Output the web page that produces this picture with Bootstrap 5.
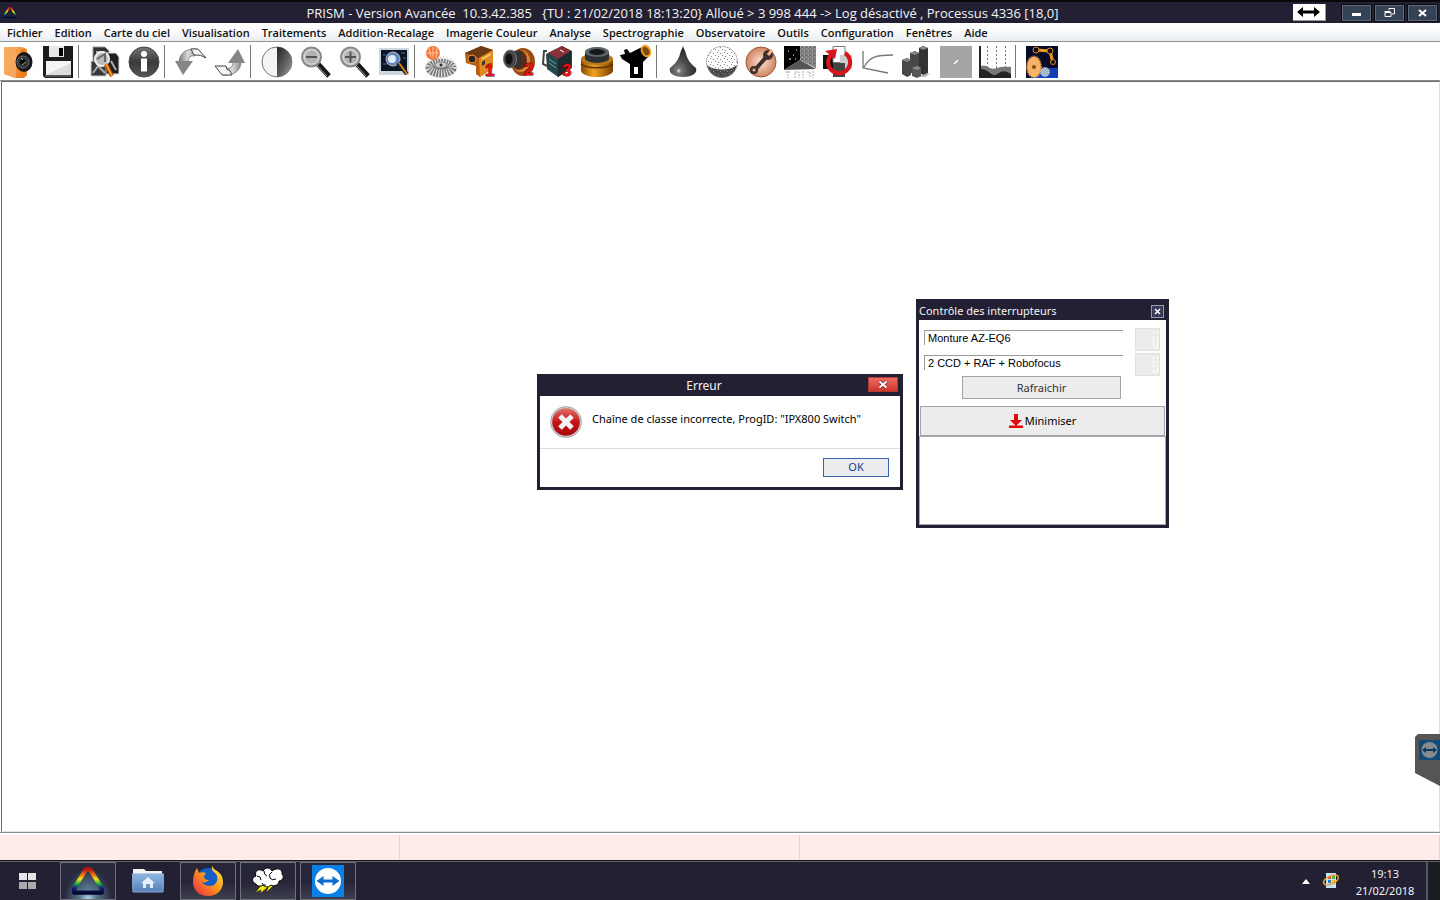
<!DOCTYPE html>
<html lang="fr">
<head>
<meta charset="utf-8">
<meta name="viewport" content="width=device-width, initial-scale=1">
<title>PRISM - Version Avancée</title>
<link href="https://cdn.jsdelivr.net/npm/bootstrap@5.3.0/dist/css/bootstrap.min.css" rel="stylesheet">
<style>
:root { --frame: #232033; }
body { font-family: "Noto Sans", "Open Sans", sans-serif; font-size: 12px; line-height: 16px; color: #000; background: #fff; }
button { padding: 0; border: 0; background: none; font: inherit; color: inherit; }
svg { display: block; }
a { color: inherit; text-decoration: none; }

/* Title bar */
.app-title { height: 23px; background: var(--frame); border-top: 2px solid #08080b; color: #f4f4f6; font-family: "Open Sans", sans-serif; font-size: 13px; }
.app-title .caption { white-space: pre; }
.app-icon { width: 72px; padding-left: 3px; }
.win-tools { gap: 4px; padding-right: 3px; }
.tv-arrow { width: 33px; height: 17px; margin-right: 12px; background: #fff; border-right: 1px solid #999; border-bottom: 1px solid #999; }
.win-btn { width: 29px; height: 16px; background: #344256; border: 1px solid #5c6878; outline: 1px solid #0c0c14; }

/* Menu and toolbar */
.menu-bar { height: 19px; padding: 1px 0 0 7px; gap: 12px; font-family: "Open Sans", sans-serif; font-size: 11px; font-weight: 600; color: #111; background: linear-gradient(#fff 25%, #e9edf0); border-bottom: 1px solid #8e9599; }
.tool-bar { height: 39px; padding-top: 1px; gap: 2px; border-bottom: 1px solid #8a8a8a; }
.tool { width: 37px; height: 32px; display: flex; justify-content: center; }
.tool svg { width: 32px; height: 32px; overflow: visible; }
.tool-sep { width: 6px; height: 33px; }
.tool-sep::before { content: ""; display: block; width: 1px; height: 100%; background: #777; }
.cam-no { font: 700 17px "Liberation Sans", sans-serif; fill: #f01010; stroke: #500; stroke-width: 1; paint-order: stroke; }

.workspace { min-height: 500px; margin-left: 1px; border: 1px solid #6d6d6d; border-right-color: #ddd; border-bottom-color: #e6e6e6; }
.status-bar { height: 29px; border-top: 1px solid #8f8f8f; padding-top: 2px; }
.status-bar div { background: #ffecea; border-right: 1px solid #e6d5d4; }
.status-cell { width: 400px; }

/* Floating windows */
.win { position: absolute; border: 3px solid var(--frame); background: #fff; }
.win-head { background: var(--frame); color: #f4f4f6; }
.win-error { left: 535px; top: 292px; width: 366px; }
.win-error .win-head { height: 19px; padding: 0 32px 1px 0; }
.close-red { right: 2px; top: 0; width: 30px; height: 15px; background: linear-gradient(#ef6b60, #cf352c); border: 1px solid #b13a34; }
.msg { height: 53px; padding: 10px; gap: 10px; border-bottom: 1px solid #ddd; font-size: 11px; }
.msg p { padding-top: 5px; }
.ok-row { height: 38px; padding: 0 11px 2px 0; }
.btn-ok { width: 66px; height: 19px; background: #ececee; border: 1px solid #3c62b0; color: #143a86; font-size: 11px; }
.win-switch { left: 914px; top: 217px; width: 253px; font-size: 11px; }
.win-switch .win-head { height: 18px; }
.close-small { width: 13px; height: 13px; background: #38385a; border: 1px solid #9a9aaf; margin-right: 2px; }
.switches { padding: 8px 6px 0 5px; gap: 2px; }
.switches .line { height: 23px; }
.field { width: 199px; height: 15px; margin-top: 2px; padding: 0 3px; border: 0; border-top: 1px solid #999; border-left: 1px solid #999; border-radius: 0; font: 11px/14px "Liberation Sans", sans-serif; }
.toggle { width: 25px; height: 23px; background: #ececec; border: 1px solid #e0e0e0; }
.btn-refresh { width: 159px; height: 23px; margin: -2px 0 0 38px; background: #ececec; border: 1px solid #a4a4a8; color: #333; }
.btn-min { height: 30px; margin: 7px 1px 0; gap: 2px; background: #ececec; border: 1px solid #a4a4a8; }
.blank { height: 89px; border: 1px solid #a9a9b4; }

.tv-tab { right: -1px; bottom: 45px; }

/* Task bar */
.task-bar { height: 39px; background: var(--frame); border-top: 1px solid #5a6264; box-shadow: 0 -1px #15151d; gap: 4px; color: #f3f3f5; font-size: 11px; }
.task { width: 56px; height: 38px; }
.task.open { border: 1px solid #6f717c; background: linear-gradient(#272638 55%, #3d3e4e); }
.task.active { background: radial-gradient(ellipse at 50% 105%, #c6e4f4 0, #54788f 22%, #29293d 62%); }
.clock { width: 74px; line-height: 17px; padding-top: 1px; }
.desk { width: 14px; height: 38px; background: #1b1e20; border-left: 2px solid #555a60; }
</style>
</head>
<body class="d-flex flex-column min-vh-100 overflow-hidden">

<svg width="0" height="0" class="position-absolute" aria-hidden="true">
  <defs>
    <linearGradient id="gDark" x1="0" y1="0" x2="0" y2="1"><stop offset="0" stop-color="#777"/><stop offset=".5" stop-color="#3a3a3a"/><stop offset="1" stop-color="#555"/></linearGradient>
    <linearGradient id="gRib" x1="0" y1="0" x2="1" y2="0"><stop offset="0" stop-color="#777"/><stop offset=".5" stop-color="#ddd"/><stop offset="1" stop-color="#888"/></linearGradient>
    <linearGradient id="gOrange" x1="0" y1="0" x2="1" y2="1"><stop offset="0" stop-color="#ffb46a"/><stop offset="1" stop-color="#ee7410"/></linearGradient>
    <linearGradient id="gAmber" x1="0" y1="0" x2="1" y2="0"><stop offset="0" stop-color="#8a4c00"/><stop offset=".4" stop-color="#f0a020"/><stop offset="1" stop-color="#7a4000"/></linearGradient>
    <radialGradient id="gCone" cx=".34" cy=".8" r=".7"><stop offset="0" stop-color="#eee"/><stop offset=".12" stop-color="#777"/><stop offset=".5" stop-color="#4c4c4c"/><stop offset="1" stop-color="#2a2a2a"/></radialGradient>
    <radialGradient id="gCopper"><stop offset="0" stop-color="#ffe5d6"/><stop offset="1" stop-color="#cf8461"/></radialGradient>
    <linearGradient id="gRain" x1="0" y1="0" x2="0" y2="1"><stop offset="0" stop-color="#c01010"/><stop offset=".25" stop-color="#ee7a10"/><stop offset=".42" stop-color="#f2e21a"/><stop offset=".62" stop-color="#22b440"/><stop offset=".8" stop-color="#10207a"/><stop offset="1" stop-color="#060a30"/></linearGradient>
    <linearGradient id="gFox" x1="1" y1="0" x2="0" y2="1"><stop offset="0" stop-color="#fff24a"/><stop offset=".45" stop-color="#ff9a1c"/><stop offset="1" stop-color="#e8204a"/></linearGradient>
    <linearGradient id="gFold" x1="0" y1="0" x2="0" y2="1"><stop offset="0" stop-color="#8fb6e2"/><stop offset="1" stop-color="#557fb8"/></linearGradient>
    <linearGradient id="gErr" x1="0" y1="0" x2="0" y2="1"><stop offset="0" stop-color="#e2716c"/><stop offset=".5" stop-color="#c41414"/><stop offset="1" stop-color="#a80808"/></linearGradient>
    <linearGradient id="gHalf" x1="0" y1="0" x2="1" y2="1"><stop offset="0" stop-color="#222"/><stop offset=".6" stop-color="#666"/><stop offset="1" stop-color="#aaa"/></linearGradient>
    <pattern id="pDots" width="7" height="6" patternUnits="userSpaceOnUse"><path d="M0 1.500h1M4 .5h1M2 3.500h1M5 4.500h1" stroke="#888"/></pattern>
    <pattern id="pNoise" width="4" height="4" patternUnits="userSpaceOnUse"><rect width="4" height="4" fill="#808080"/><path d="M0 1h1M2 3h1" stroke="#bbb"/><path d="M2 1h1M1 2h1" stroke="#555"/></pattern>
    <symbol id="prism" viewBox="0 0 32 28"><path d="M14 3h4l11 18v4H3v-4z" fill="none" stroke="url(#gRain)" stroke-width="4" stroke-linejoin="round"/></symbol>
    <symbol id="lens" viewBox="0 0 32 32"><path d="M18 18L29 30" stroke="#161616" stroke-width="5"/><path d="M17 19l10 11" stroke="#999" stroke-width="1"/><circle cx="11.500" cy="11" r="9.500" fill="#c4c4c4" stroke="#888" stroke-width="2"/><circle cx="11.500" cy="11" r="7" fill="#b2b2b2" stroke="#ddd"/></symbol>
  </defs>
</svg>

<header class="app-title d-flex align-items-center">
  <div class="app-icon"><svg width="14" height="13"><use href="#prism"/></svg></div>
  <div class="caption flex-grow-1 text-center">PRISM - Version Avancée  10.3.42.385   {TU : 21/02/2018 18:13:20} Alloué &gt; 3 998 444 -&gt; Log désactivé , Processus 4336 [18,0]</div>
  <div class="win-tools d-flex align-items-center">
    <button class="tv-arrow" aria-label="TeamViewer"><svg width="32" height="16"><path d="M4 8l6-5v3.500h11V3l6 5-6 5V9.500H10V13z"/></svg></button>
    <button class="win-btn" aria-label="Réduire"><svg width="27" height="14"><path d="M9 8.500h9" stroke="#fff" stroke-width="3"/></svg></button>
    <button class="win-btn" aria-label="Restaurer"><svg width="27" height="14" fill="none" stroke="#fff"><path d="M9 6.500h6v4H9zM8.500 5.500h6M13 4V2.500h5.500V8H16"/></svg></button>
    <button class="win-btn" aria-label="Fermer"><svg width="27" height="14"><path d="M10 4l7 6M17 4l-7 6" stroke="#fff" stroke-width="2"/></svg></button>
  </div>
</header>

<nav class="menu-bar d-flex align-items-center">
  <a href="#">Fichier</a><a href="#">Edition</a><a href="#">Carte du ciel</a><a href="#">Visualisation</a><a href="#">Traitements</a><a href="#">Addition-Recalage</a><a href="#">Imagerie Couleur</a><a href="#">Analyse</a><a href="#">Spectrographie</a><a href="#">Observatoire</a><a href="#">Outils</a><a href="#">Configuration</a><a href="#">Fenêtres</a><a href="#">Aide</a>
</nav>

<div class="tool-bar d-flex align-items-center" role="toolbar" aria-label="Outils">
  <button class="tool" aria-label="Ouvrir"><svg viewBox="0 0 32 32"><path d="M1 1h18l5 2v26l-3 3h-9L1 28z" fill="url(#gOrange)"/><path d="M1 1l12 3v28L1 28z" fill="#f9a95e"/><path d="M18 4v27l4-2V3z" fill="#e27a20"/><ellipse cx="21" cy="16" rx="8.500" ry="10" fill="#15171b"/><circle cx="20" cy="16" r="6" fill="#2c3640" stroke="#666"/><circle cx="20" cy="16" r="3"/><path d="M18 12l2 2M19 19l4-3" stroke="#c6cf5a"/></svg></button>
  <button class="tool" aria-label="Enregistrer"><svg viewBox="0 0 32 32"><path d="M1 0h30v32H3l-2-2z" fill="#1d1d1d"/><path d="M7 0h15v11H7z" fill="#e8e8e8"/><path d="M17 2h4v8h-4z"/><path d="M4 15h25v14H4z" fill="#f4f4f4"/><path d="M4 29L29 17v12z" fill="#ddd"/><path d="M3 30h26" stroke="#888"/></svg></button>
  <span class="tool-sep"></span>
  <button class="tool" aria-label="Rechercher"><svg viewBox="0 0 32 32"><path d="M4 1h12l4 4v11H4z" fill="#333" stroke="#999"/><path d="M14 7h13l3 4v17H14z" fill="#202020" stroke="#ddd"/><path d="M2 15h15v15H2z" fill="#383838" stroke="#ccc"/><path d="M4 27l5-7 7 7M7 6h7v7H7M22 15l5 9" stroke="#aaa" fill="none" stroke-width="2"/><circle cx="13" cy="13" r="7" fill="#bbb" stroke="#eee" stroke-width="2"/><path d="M8 13l8-5v8" stroke="#666" fill="none" stroke-width="2"/><path d="M17 18l6 12" stroke="#a53b00" stroke-width="4"/><path d="M17 18l6 12" stroke="#ff9a20" stroke-width="2"/></svg></button>
  <button class="tool" aria-label="Informations"><svg viewBox="0 0 32 32"><circle cx="16" cy="16" r="15" fill="url(#gDark)" stroke="#444"/><circle cx="16" cy="8" r="3" fill="#fff"/><path d="M13 12.500h6v13h-6z" fill="#fff"/></svg></button>
  <span class="tool-sep"></span>
  <button class="tool" aria-label="Annuler"><svg viewBox="0 0 32 32"><path d="M4 17C4 8 10 2 22 3l-2 7c-4-1-7 1-7 7z" fill="url(#gRib)" stroke="#777" stroke-width=".8"/><path d="M0 15h18L8 29z" fill="#858585"/><path d="M16 3h7l8 9q-5-4-12-3z" fill="#f4f4f4" stroke="#444"/></svg></button>
  <button class="tool" aria-label="Rétablir"><svg viewBox="0 0 32 32"><path d="M27 15c0 9-6 15-18 14l2-7c6 1 8-1 8-7z" fill="url(#gRib)" stroke="#777" stroke-width=".8"/><path d="M14 17h17L24 3z" fill="#858585"/><path d="M1 20h11q0 4 4 5l2 4H8z" fill="#f4f4f4" stroke="#444"/></svg></button>
  <span class="tool-sep"></span>
  <button class="tool" aria-label="Contraste"><svg viewBox="0 0 32 32"><circle cx="16" cy="16" r="15" fill="#f4f4f4" stroke="#777"/><path d="M16 1a15 15 0 0 1 0 30z" fill="url(#gHalf)"/></svg></button>
  <button class="tool" aria-label="Zoom arrière"><svg viewBox="0 0 32 32"><use href="#lens"/><path d="M6 11h11" stroke="#555" stroke-width="2"/></svg></button>
  <button class="tool" aria-label="Zoom avant"><svg viewBox="0 0 32 32"><use href="#lens"/><path d="M6 11h11M11.500 5.500v11" stroke="#555" stroke-width="2"/></svg></button>
  <button class="tool" aria-label="Aperçu"><svg viewBox="0 0 32 32"><path d="M1 2h30v27H1z" fill="#ccd7df"/><path d="M3 4h26v21H3z" fill="#0b1526"/><path d="M5 9h3M5 18h4M23 7h4M25 12h3" stroke="#4a6a9c"/><circle cx="15" cy="13" r="7" fill="#5f87bd" stroke="#bbb"/><circle cx="14" cy="13" r="4" fill="#dfeaf8"/><path d="M20 17l9 11" stroke="#222" stroke-width="4"/><path d="M21 17l8 11" stroke="#f08a18" stroke-width="1.500"/></svg></button>
  <span class="tool-sep"></span>
  <button class="tool" aria-label="Monture"><svg viewBox="0 0 32 32"><ellipse cx="16" cy="22" rx="15.500" ry="9.500" fill="#777"/><ellipse cx="16" cy="21" rx="12" ry="6.500" fill="none" stroke="#ddd" stroke-width="8" stroke-dasharray="1.200 1.500"/><ellipse cx="16" cy="19" rx="6" ry="3" fill="#ccc" stroke="#888"/><circle cx="16" cy="19" r="1.500" fill="#333"/><circle cx="8" cy="7" r="7" fill="#f07838"/><path d="M4 2l2 9M8 1v11M12 2l-1 10M2 7h12" stroke="#ffc4a0"/></svg></button>
  <button class="tool" aria-label="Caméra 1"><svg viewBox="0 0 32 32"><path d="M1 7L17 0l12 4v18l-13 9-4-3V20L2 17z" fill="#b85c12"/><path d="M1 7L17 0l12 4-14 8z" fill="#6e3a15"/><path d="M15 12l14-8v18l-13 9z" fill="#e08a20"/><circle cx="8" cy="13" r="4" fill="#2c211c" stroke="#e8943c"/><path d="M18 16l3-2v4l-3 2z" fill="#333"/><path d="M18 13l9-5" stroke="#ffcc70" stroke-width="1.500"/><text x="21" y="30" class="cam-no">1</text></svg></button>
  <button class="tool" aria-label="Caméra 2"><svg viewBox="0 0 32 32"><ellipse cx="20" cy="16" rx="12" ry="14" fill="#9c4a12"/><ellipse cx="18" cy="15" rx="9" ry="11" fill="#dc8434"/><ellipse cx="16" cy="14" rx="8" ry="10" fill="#5a2c18"/><path d="M7 4l11 2v14L8 22z" fill="#333"/><ellipse cx="7" cy="13" rx="6.500" ry="9" fill="#444" stroke="#777"/><ellipse cx="6" cy="13" rx="3.500" ry="5.500" fill="#111"/><text x="21" y="29" class="cam-no">2</text></svg></button>
  <button class="tool" aria-label="Caméra 3"><svg viewBox="0 0 32 32"><path d="M4 8l16-8 10 5v17l-14 9L5 23z" fill="#26474a"/><path d="M6 7L20 0l9 5-13 8z" fill="#8a3038"/><path d="M16 13l13-8v17l-13 9z" fill="#1d2a30"/><path d="M5 5H2L1 18l4 2" fill="none" stroke="#444" stroke-width="2"/><path d="M7 13l7 5M7 17l7 5" stroke="#70a0a0"/><path d="M18 4l4 2" stroke="#fff"/><text x="20" y="30" class="cam-no">3</text></svg></button>
  <button class="tool" aria-label="Roue à filtres"><svg viewBox="0 0 32 32"><path d="M0 13h32v12c-3 8-29 8-32 0z" fill="url(#gAmber)"/><path d="M0 18c5 5 27 5 32 0" fill="none" stroke="#5a3200" stroke-width="1.500"/><ellipse cx="16" cy="13" rx="16" ry="6" fill="#b87818"/><path d="M4 6v7c3 5 21 5 24 0V6z" fill="#2a3034"/><ellipse cx="16" cy="6" rx="12" ry="5" fill="#59636a"/><ellipse cx="16" cy="6" rx="8" ry="3" fill="#16181a"/></svg></button>
  <button class="tool" aria-label="Guidage"><svg viewBox="0 0 32 32"><path d="M0 9l5-1-1-4 3-1 3 4 8-4 6-3 6 9-7 7v16H10V18l-8-5z"/><path d="M14 21h4v7h-4z" fill="#fff"/><ellipse cx="26" cy="5" rx="4" ry="5.500" transform="rotate(-28 26 5)" fill="#7a4a10" stroke="#f0a020" stroke-width="2"/></svg></button>
  <span class="tool-sep"></span>
  <button class="tool" aria-label="Profil"><svg viewBox="0 0 32 32"><path d="M16 0c1 3 2 4 3 8 2 7 6 11 10 14 4 12-30 12-26 0 4-3 8-7 10-14 1-4 2-5 3-8z" fill="url(#gCone)"/></svg></button>
  <button class="tool" aria-label="Sphère"><svg viewBox="0 0 32 32"><circle cx="16" cy="16" r="15.500" fill="#fff"/><path d="M1 19c7 6 23 6 30 0-3 17-27 17-30 0" fill="#4a4a4a"/><circle cx="16" cy="16" r="15.500" fill="url(#pDots)" stroke="#888" stroke-dasharray="2 1"/></svg></button>
  <button class="tool" aria-label="Réglages"><svg viewBox="0 0 32 32"><circle cx="16" cy="16" r="15" fill="url(#gCopper)" stroke="#9c5a3c"/><path d="M9 25L23 9" stroke="#40302c" stroke-width="4"/><circle cx="9" cy="24" r="4" fill="#40302c"/><circle cx="23" cy="9" r="5" fill="#40302c"/><path d="M23 9l4-5" stroke="#eeb494" stroke-width="3"/><circle cx="9" cy="24" r="1.500" fill="#e9b79e"/></svg></button>
  <button class="tool" aria-label="Bruit"><svg viewBox="0 0 32 32"><path d="M0 0h16v14L0 24z"/><path d="M16 0h16v22L16 14z" fill="url(#pNoise)"/><path d="M0 24l16-10 16 9z" fill="#555"/><path d="M4 5h1M9 9h1M12 4h1M5 13h2M11 13h1" stroke="#fff"/><path d="M1 26h6M4 25v7M11 32v-6h4v6M19 25v7M23 26h3v5M29 25v7" stroke="#aaa" fill="none" stroke-dasharray="2 1"/></svg></button>
  <button class="tool" aria-label="Rotation"><svg viewBox="0 0 32 32"><path d="M0 9h12v14H0z" fill="#111"/><path d="M10 .5h12v16H10z" fill="#fff" stroke="#777"/><path d="M17 9h12v14H17z" fill="#ccc"/><path d="M10 17h12v14H10z" fill="#444"/><path d="M22 7a11 11 0 1 1-13 1" fill="none" stroke="#d8141c" stroke-width="4"/><path d="M2 5l12-2-2 10z" fill="#d8141c"/></svg></button>
  <button class="tool" aria-label="Courbe"><svg viewBox="0 0 32 32"><path d="M1 5v17l25 5M2 21C8 10 16 9 31 9" fill="none" stroke="#777" stroke-width="1.300"/></svg></button>
  <button class="tool" aria-label="Histogramme"><svg viewBox="0 0 32 32"><path d="M20 29l9-2-4 4H12z" fill="#bbb"/><path d="M1 14l5-2 4 2v15l-4 2-5-3zM9 7l5-2 4 2v20H9z" fill="#484848"/><path d="M18 2l4-2 5 2v25l-5 2-4-3z" fill="#333"/><path d="M11 22l5-2 4 2v8l-4 2-5-2z" fill="#555"/><path d="M1 14l5 2 4-2-4-2zM9 7l5 2 4-2-4-2zM18 2l4 2 5-2-5-2zM11 22l5 2 4-2-4-2z" fill="#888"/></svg></button>
  <button class="tool" aria-label="Image"><svg viewBox="0 0 32 32"><path d="M0 0h32v32H0z" fill="#a4a4a4"/><path d="M14 18l4-4" stroke="#fff" stroke-width="1.500"/></svg></button>
  <button class="tool" aria-label="Coupe"><svg viewBox="0 0 32 32"><path d="M0 21q5-3 9 0t9 1 14-1v11H0z" fill="#777"/><path d="M0 23q7 0 11 4t9 0 12 1v4H0z" fill="#222"/><path d="M1 0v32" stroke="#222" stroke-width="2"/><path d="M8.500 0v22M17.500 0v22M26.500 0v22" stroke="#777" stroke-dasharray="2 2"/></svg></button>
  <span class="tool-sep"></span>
  <button class="tool" aria-label="Automatisation"><svg viewBox="0 0 32 32"><path d="M0 0h32v32H0z" fill="#060c28"/><path d="M14 22h18v10H8z" fill="#123fb8"/><path d="M10 4l14 1 3 12" stroke="#f0961e" stroke-width="3" fill="none"/><g fill="#111" stroke="#e08a20"><circle cx="10" cy="4" r="3"/><circle cx="24" cy="5" r="3"/><circle cx="27" cy="16" r="2.500"/></g><ellipse cx="8" cy="21" rx="7" ry="10.500" fill="#f5b469" stroke="#e7933b" stroke-width="2" stroke-dasharray="1 1"/><circle cx="8" cy="21" r="2" fill="#8a4c10"/><circle cx="19" cy="26" r="4.500" fill="#a8b8c4" stroke="#ddd" stroke-dasharray="1 1"/></svg></button>
</div>

<main class="workspace flex-grow-1 position-relative">
  <section class="win win-error" role="dialog" aria-labelledby="errTitle">
    <div class="win-head position-relative d-flex align-items-center justify-content-center">
      <span id="errTitle">Erreur</span>
      <button class="close-red position-absolute d-flex align-items-center justify-content-center" aria-label="Fermer"><svg width="10" height="9"><path d="M1.500 1.500l7 6M8.500 1.500l-7 6" stroke="#7d2420" stroke-width="3.500"/><path d="M1.500 1.500l7 6M8.500 1.500l-7 6" stroke="#fff" stroke-width="2"/></svg></button>
    </div>
    <div class="msg d-flex">
      <svg width="32" height="32" viewBox="0 0 32 32"><circle cx="16" cy="16" r="15.500" fill="#ccc" stroke="#888" stroke-width=".6"/><circle cx="16" cy="16" r="13.800" fill="url(#gErr)"/><path d="M10 10l12 12M22 10L10 22" stroke="#f2f2f2" stroke-width="5"/></svg>
      <p class="m-0">Chaîne de classe incorrecte, ProgID: "IPX800 Switch"</p>
    </div>
    <div class="ok-row d-flex align-items-center justify-content-end"><button class="btn-ok">OK</button></div>
  </section>

  <section class="win win-switch" aria-labelledby="swTitle">
    <div class="win-head d-flex align-items-center justify-content-between">
      <span id="swTitle">Contrôle des interrupteurs</span>
      <button class="close-small d-flex align-items-center justify-content-center" aria-label="Fermer le panneau"><svg width="7" height="7"><path d="M1 1l5 5M6 1L1 6" stroke="#fff" stroke-width="1.500"/></svg></button>
    </div>
    <div class="switches d-flex flex-column">
      <div class="line d-flex justify-content-between"><input class="field" aria-label="Interrupteur 1" value="Monture AZ-EQ6"><button class="toggle" aria-label="Basculer 1"><svg width="23" height="21" fill="none" stroke="#fff"><path d="M17.500 2v3M21.500 2v3M17.500 7v11h4V7" stroke-dasharray="3 1"/></svg></button></div>
      <div class="line d-flex justify-content-between"><input class="field" aria-label="Interrupteur 2" value="2 CCD + RAF + Robofocus"><button class="toggle" aria-label="Basculer 2"><svg width="23" height="21" fill="none" stroke="#fff"><path d="M17.500 2v3M21.500 2v3M17.500 7v11h4V7" stroke-dasharray="3 1"/></svg></button></div>
      <button class="btn-refresh">Rafraichir</button>
    </div>
    <div class="d-grid"><button class="btn-min d-flex align-items-center justify-content-center"><svg width="14" height="14" fill="#e00808"><path d="M5 0h4v6h4l-6 6-6-6h4zM0 11.500h14V14H0z"/></svg><span>Minimiser</span></button></div>
    <div class="blank"></div>
  </section>

  <button class="tv-tab position-absolute" aria-label="Panneau TeamViewer"><svg width="25" height="52"><path d="M3 0h22v52L0 39V3z" fill="#555"/><path d="M4 6h21v20H4z" fill="#0f4a78"/><circle cx="14.500" cy="16" r="8" fill="#858b90"/><path d="M7 16l4-3v2h7v-2l4 3-4 3v-2h-7v2z" fill="#0f3a60"/></svg></button>
</main>

<div class="status-bar d-flex"><div class="status-cell"></div><div class="status-cell"></div><div class="flex-grow-1"></div></div>

<footer class="task-bar d-flex align-items-center">
  <button class="task d-flex align-items-center justify-content-center" aria-label="Démarrer"><svg width="18" height="18"><path d="M0 1h8v7H0zM9 1h8v7H9z" fill="#e6e6e6"/><path d="M0 10h8v7H0zM9 10h8v7H9z" fill="#aaa"/></svg></button>
  <button class="task open active d-flex align-items-center justify-content-center" aria-label="PRISM"><svg width="34" height="30"><use href="#prism"/></svg></button>
  <button class="task d-flex align-items-center justify-content-center" aria-label="Dossiers"><svg width="32" height="26"><path d="M1 1h11l2 2h16v8H1z" fill="#f4f4f4"/><path d="M0 6h32l-1 18H1z" fill="url(#gFold)" stroke="#87a9d4"/><path d="M16 9l7 6h-2v5h-3v-4h-4v4h-3v-5H9z" fill="#e6eef8"/></svg></button>
  <button class="task open d-flex align-items-center justify-content-center" aria-label="Firefox"><svg width="32" height="32" viewBox="0 0 32 32"><circle cx="16" cy="15" r="12" fill="#145ec8"/><path d="M20 1c-1 4 1 5 4 8 3 4 1 12-6 12-4 0-7-2-8-4 3 1 5 0 7-2-3 0-5-1-5-4l2-3c-3-1-5-1-7 0L5 3C2 7 1 12 1 17c0 8 6 14 15 14s15-6 15-14c0-6-3-9-6-11-2-1-4-3-5-5z" fill="url(#gFox)"/></svg></button>
  <button class="task open d-flex align-items-center justify-content-center" aria-label="Météo"><svg width="32" height="28" viewBox="0 0 32 28"><path d="M9 18l-6 8 6-3-1 4 8-7-2 6 9-9" fill="#f4e810" stroke="#222" stroke-width=".7"/><path d="M4 17c-5-2-4-7 0-8-2-5 3-8 7-5 3-5 8-3 9 0 5-4 11-2 10 3 3 3 0 7-3 7 0 4-5 6-8 4-3 3-6 2-8 0-3 2-6 1-7-1z" fill="#fff" stroke="#000"/><path d="M5 9q4 0 4 4M12 4q0 4 3 5M20 5q-4 2-2 6 2 3 6 1M10 16q1 3 4 2" fill="none" stroke="#000"/></svg></button>
  <button class="task open d-flex align-items-center justify-content-center" aria-label="TeamViewer"><svg width="32" height="32"><path d="M0 0h32v32H0z" fill="#0b7fe8"/><circle cx="16" cy="16" r="13" fill="#fff"/><path d="M4.500 16l7-5v3.500h9V11l7 5-7 5v-3.500h-9V21z" fill="#0b6ed0"/></svg></button>
  <button class="ms-auto me-2" aria-label="Icônes cachées"><svg width="8" height="5"><path d="M4 0l4 5H0z" fill="#fff"/></svg></button>
  <button class="me-1" aria-label="Mises à jour"><svg width="18" height="18"><path d="M4 1h10v15H4z" fill="#bfe6f8"/><path d="M6 4h3v3H6z" fill="#e05030"/><path d="M10 4h3v3h-3z" fill="#58b040"/><path d="M6 8h3v3H6z" fill="#2878d0"/><path d="M10 8h3v3h-3z" fill="#f0c020"/><ellipse cx="9" cy="8" rx="8" ry="4" transform="rotate(-25 9 8)" fill="none" stroke="#e8a030" stroke-width="1.500"/></svg></button>
  <div class="clock text-center"><div>19:13</div><div>21/02/2018</div></div>
  <button class="desk" aria-label="Afficher le bureau"></button>
</footer>

<script src="https://cdn.jsdelivr.net/npm/bootstrap@5.3.0/dist/js/bootstrap.bundle.min.js"></script>
</body>
</html>
